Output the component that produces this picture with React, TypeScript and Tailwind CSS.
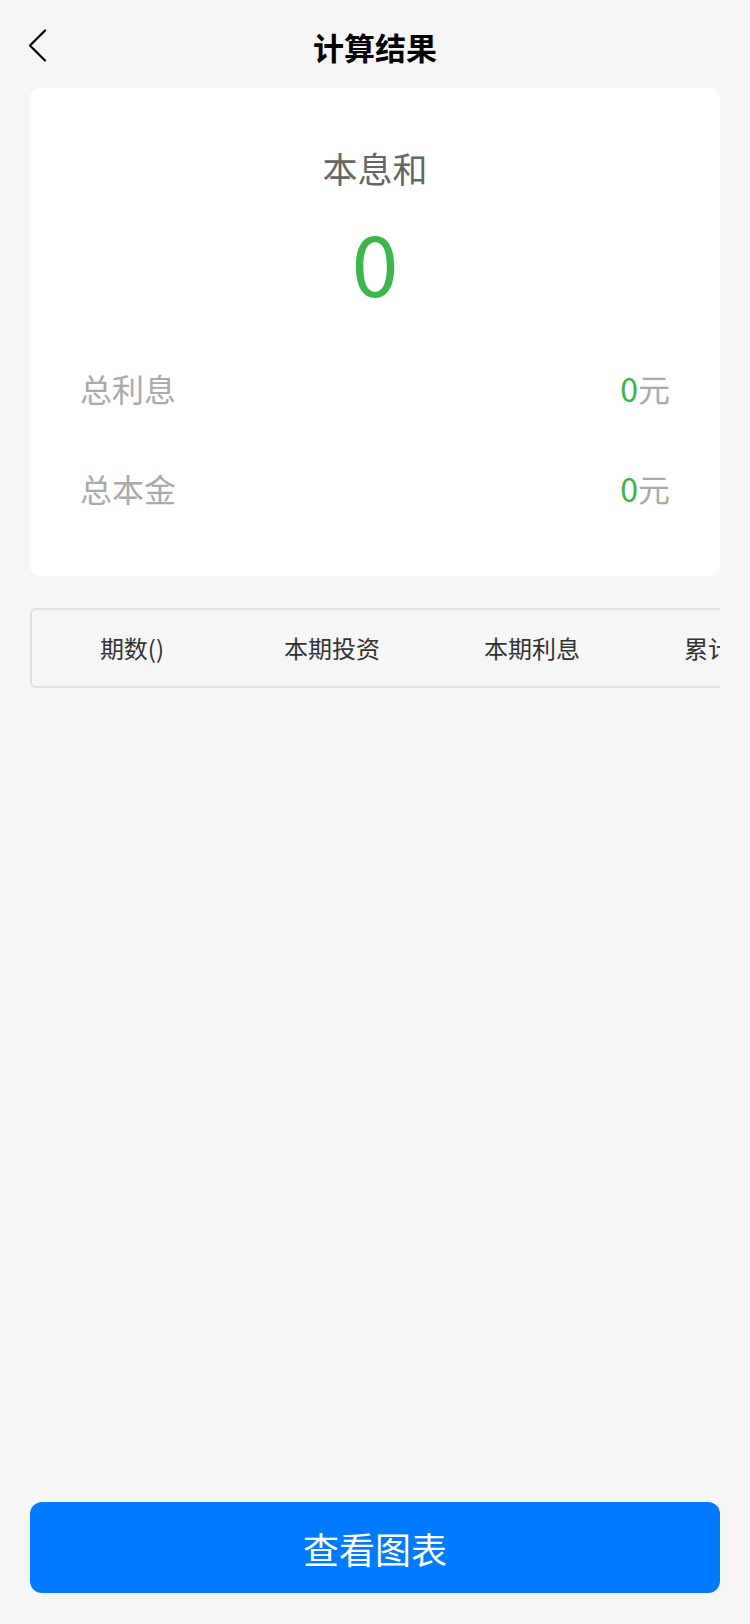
const FONT = { fontFamily: '"Noto Sans CJK SC", "Noto Sans", sans-serif' };

const columns = ['期数()', '本期投资', '本期利息', '累计投资', '累计利息'];

function SummaryRow({ label, value }: { label: string; value: string }) {
  return (
    <div className="flex h-[100px] items-center justify-between pl-[50px] pr-[50px]">
      <span className="text-[32px] leading-[40px] text-[#aaaaaa]">{label}</span>
      <span className="text-[32px] leading-[40px] text-[#aaaaaa]">
        <span className="text-[#3cb54a]">{value}</span>元
      </span>
    </div>
  );
}

export default function App() {
  return (
    <div className="flex min-h-screen flex-col bg-[#f6f6f6]" style={FONT}>
      {/* header */}
      <div className="relative flex h-[88px] items-start justify-center pt-[25px]">
        <button className="absolute left-[27px] top-[29px]">
          <svg width="20" height="33" viewBox="0 0 20 33" fill="none">
            <path d="M18 1.5 L3 16.5 L18 31.5" stroke="#000" strokeWidth="2.2" strokeLinecap="round" strokeLinejoin="round" />
          </svg>
        </button>
        <h1 className="text-[31px] font-bold leading-[44px] text-black">计算结果</h1>
      </div>

      {/* summary card */}
      <div className="mx-[30px] rounded-[10px] bg-white pb-[38px] pt-[60px]">
        <div className="text-center text-[35px] leading-[40px] text-[#666666]">本息和</div>
        <div className="mt-[25px] text-center text-[84px] leading-[96px] text-[#3cb54a]">0</div>
        <div className="mt-[29px]">
          <SummaryRow label="总利息" value="0" />
          <SummaryRow label="总本金" value="0" />
        </div>
      </div>

      {/* table header */}
      <div className="ml-[30px] mr-[30px] mt-[32px] overflow-hidden">
        <div className="flex h-[80px] w-max items-center rounded-l-[6px] border-2 border-r-0 border-[#dde0e4]">
          {columns.map((c) => (
            <div key={c} className="w-[200px] shrink-0 text-center text-[24px] leading-[32px] text-[#333333]">
              {c}
            </div>
          ))}
        </div>
      </div>

      <div className="flex-1" />

      {/* bottom button */}
      <div className="px-[30px] pb-[31px]">
        <button className="flex h-[91px] w-full items-center justify-center rounded-[12px] bg-[#007aff] text-[36px] text-white">
          查看图表
        </button>
      </div>
    </div>
  );
}
